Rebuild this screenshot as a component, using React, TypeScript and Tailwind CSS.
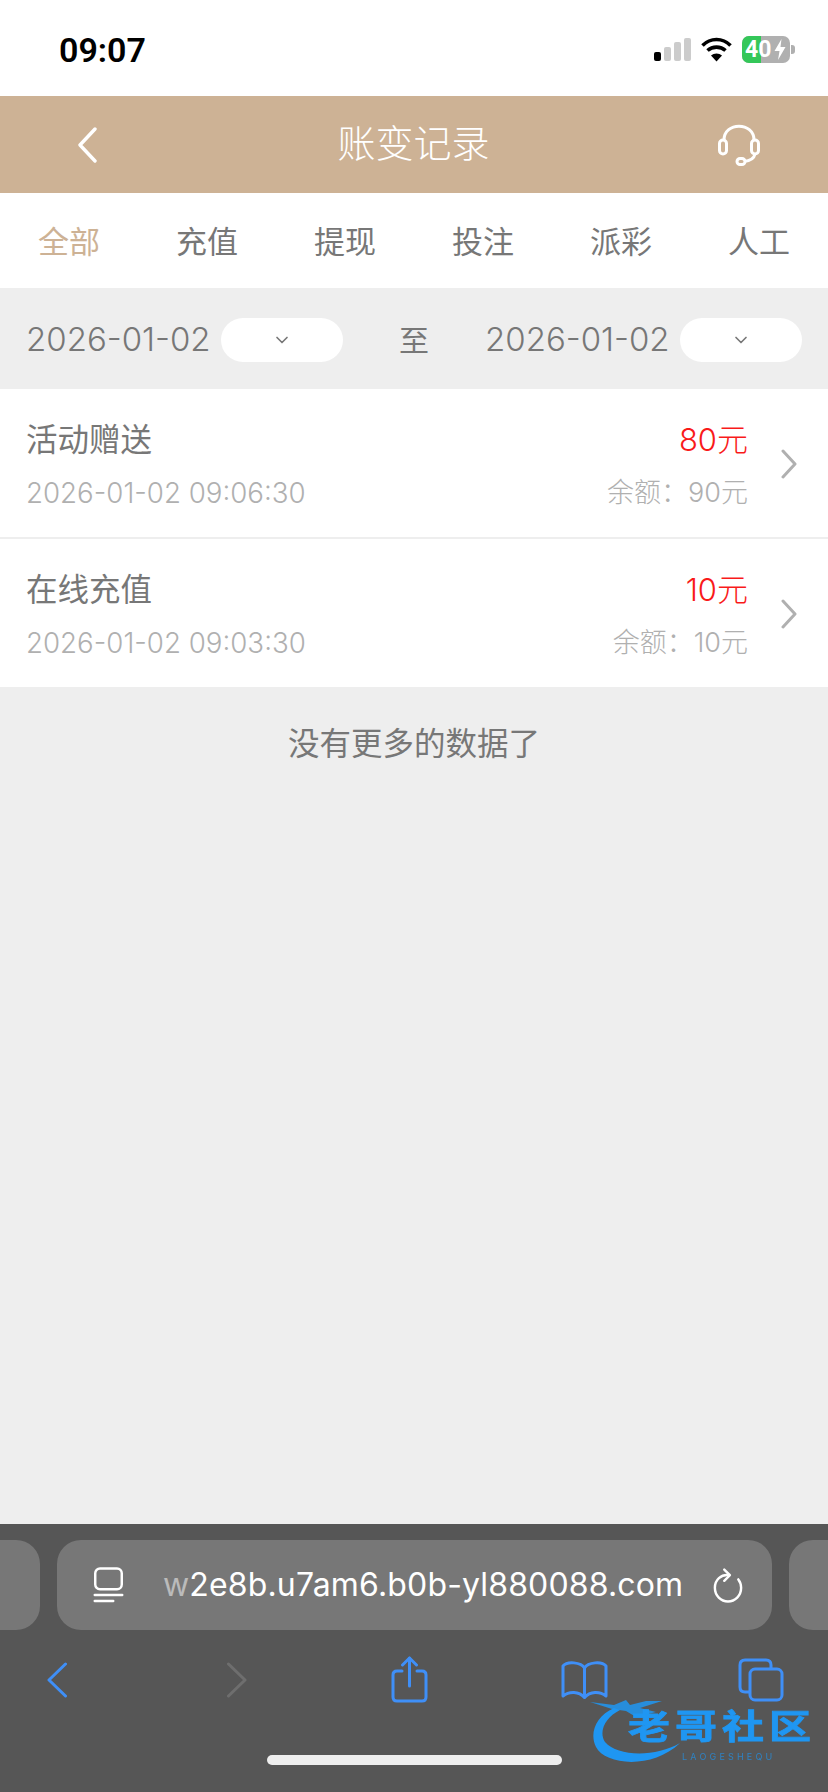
import { ChevronDown } from "lucide-react";

const tabs = ["全部", "充值", "提现", "投注", "派彩", "人工"];

const records = [
  { title: "活动赠送", time: "2026-01-02 09:06:30", amount: "80元", balance: "余额：90元" },
  { title: "在线充值", time: "2026-01-02 09:03:30", amount: "10元", balance: "余额：10元" },
];

const font = "font-['Inter','Noto_Sans_CJK_SC',sans-serif]";

function StatusBar() {
  return (
    <div className="flex h-[96px] items-center justify-between bg-white pt-[3px] pr-[33px] pl-[59px]">
      <span className="font-['Roboto',sans-serif] text-[34px] leading-none font-semibold text-black">09:07</span>
      <div className="flex items-center">
        {/* signal */}
        <div className="flex items-end gap-[3px]">
          <div className="h-[9px] w-[7px] rounded-[2px] bg-black" />
          <div className="h-[14px] w-[7px] rounded-[2px] bg-[#cccccc]" />
          <div className="h-[19px] w-[7px] rounded-[2px] bg-[#cccccc]" />
          <div className="h-[23px] w-[7px] rounded-[2px] bg-[#cccccc]" />
        </div>
        <svg className="ml-[10px]" width="31" height="25" viewBox="0 0 31 25" fill="none" stroke="#000" strokeWidth="3.6">
          <path d="M1.5 8.5C9.5 0.5 21.5 0.5 29.5 8.5" />
          <path d="M6.5 13.5C11.5 9 19.5 9 24.5 13.5" />
          <path d="M15.5 24.5L10 18.5C13 15.8 18 15.8 21 18.5Z" fill="#000" stroke="none" />
        </svg>
        {/* battery */}
        <div className="relative ml-[10px] flex h-[27px] w-[48px] overflow-hidden rounded-[7px] bg-[#b0b0b0]">
          <div className="w-[19px] bg-[#34c759]" />
          <span className="absolute top-0 left-[3px] font-['Roboto',sans-serif] text-[23px] leading-[27px] font-bold text-white">40</span>
          <svg className="absolute top-[3px] left-[31px]" width="14" height="21" viewBox="0 0 13 21" fill="#fff">
            <path d="M8 0L1 12H6L4.5 21L12 8H7Z" />
          </svg>
        </div>
        <div className="ml-[1px] h-[9px] w-[4px] rounded-r-[3px] bg-[#b0b0b0]" />
      </div>
    </div>
  );
}

function Header() {
  return (
    <div className="flex h-[97px] items-center justify-between bg-[#cdb295] pr-[67px] pl-[77px]">
      <svg width="20" height="36" viewBox="0 0 20 36" fill="none" stroke="#fff" strokeWidth="3.4" strokeLinecap="round" strokeLinejoin="round">
        <path d="M18 2L3 18L18 34" />
      </svg>
      <h1 className="mb-[3px] ml-[13px] text-[38px] leading-none font-light text-white">账变记录</h1>
      <svg width="44" height="42" viewBox="0 0 44 42" fill="none" stroke="#fff" strokeWidth="3">
        <path d="M7 16C7 -2.5 37 -2.5 37 16" />
        <rect x="2.5" y="16" width="7" height="14" rx="3.5" />
        <rect x="34.5" y="16" width="7" height="14" rx="3.5" />
        <path d="M38 30C37 35 32 37 27 37.5" />
        <rect x="20" y="34.5" width="8" height="6" rx="3" />
      </svg>
    </div>
  );
}

function DatePicker() {
  return (
    <div className="flex items-center">
      <span className="w-[195px] text-[33px] leading-none font-light text-[#777777]">2026-01-02</span>
      <div className="flex h-[44px] w-[122px] items-center justify-center rounded-[22px] bg-white">
        <ChevronDown size={20} color="#777777" strokeWidth={2} />
      </div>
    </div>
  );
}

function RecordRow({ title, time, amount, balance }: (typeof records)[number]) {
  return (
    <div className="flex h-[148px] items-center bg-white pr-[31px] pl-[26px]">
      <div className="flex flex-1 flex-col gap-[20px] pt-[4px]">
        <span className="text-[31.5px] leading-[36px] text-[#777777]">{title}</span>
        <span className="text-[27.7px] leading-[30px] font-light text-[#b0b0b0]">{time}</span>
      </div>
      <div className="flex flex-col items-end gap-[20px] pt-[4px]">
        <span className="text-[31px] leading-[36px] font-light text-[#f91a1a]">{amount}</span>
        <span className="text-[27px] leading-[30px] font-light text-[#b0b0b0]">{balance}</span>
      </div>
      <svg className="mt-[2px] ml-[33px]" width="16" height="30" viewBox="0 0 16 30" fill="none" stroke="#b0b0b0" strokeWidth="3" strokeLinecap="round" strokeLinejoin="round">
        <path d="M2 2L14 15L2 28" />
      </svg>
    </div>
  );
}

function Watermark() {
  return (
    <div className="absolute top-[1697px] left-[590px] h-[70px] w-[224px] text-[#1f96f2] blur-[0.7px]">
      <svg className="absolute top-0 left-0" width="224" height="70" viewBox="0 0 224 70" fill="#1f96f2">
        <path d="M24 11C6 19 -1 36 6 50C15 68 62 73 90 46C66 60 28 60 15 45C8 34 16 20 30 13Z" />
        <path d="M0 5L24 8L36 3L40 8L56 4L72 4L50 11L66 15L46 20L36 14L22 12Z" fillOpacity="0.85" />
      </svg>
      <span className="absolute top-[12px] left-[38px] origin-top scale-y-[0.8] text-[42px] leading-[44px] font-bold tracking-[5px] whitespace-nowrap [-webkit-text-stroke:1px_#1f96f2]">
        老哥社区
      </span>
      <span className="absolute top-[55px] left-[92px] text-[9px] leading-[10px] tracking-[3.2px] whitespace-nowrap opacity-70">LAOGESHEQU</span>
    </div>
  );
}

function SafariBar() {
  return (
    <div className="flex h-[268px] flex-col bg-[#565656] pt-[16px]">
      <div className="flex h-[90px] items-stretch gap-[17px]">
        <div className="-ml-[40px] w-[80px] shrink-0 rounded-[24px] bg-[#777777]" />
        <div className="flex w-[715px] shrink-0 items-center rounded-[24px] bg-[#777777] pr-[29px] pl-[36px]">
          <svg className="shrink-0" width="31" height="36" viewBox="0 0 32 38" fill="none" stroke="#fff" strokeWidth="2.6" strokeLinecap="round">
            <rect x="2" y="1.5" width="28" height="22" rx="5" />
            <path d="M1.5 29.5H30.5" />
            <path d="M1.5 36H21" />
          </svg>
          <span className="ml-[39px] flex-1 text-[32px] leading-none font-normal tracking-[0.15px] whitespace-nowrap text-white">
            <span className="text-white/50">w</span>2e8b.u7am6.b0b-yl880088.com
          </span>
          <svg className="shrink-0" width="30" height="37" viewBox="0 0 32 38" fill="none" stroke="#fff" strokeWidth="2.6" strokeLinecap="round" strokeLinejoin="round">
            <path d="M17 8C8.5 7 2 13 2 21.5C2 30 8.5 36 16 36C23.5 36 30 30 30 21.5C30 18 29 15 27 12.5" />
            <path d="M12 2L18 8L12 14" />
          </svg>
        </div>
        <div className="w-[80px] shrink-0 rounded-[24px] bg-[#777777]" />
      </div>
      <div className="mt-[26px] flex h-[47px] items-center pl-[47px]">
        <svg width="20" height="36" viewBox="0 0 20 36" fill="none" stroke="#3f8ff7" strokeWidth="3" strokeLinecap="round" strokeLinejoin="round">
          <path d="M18.5 2L2 18L18.5 34" />
        </svg>
        <svg className="ml-[160px]" width="20" height="36" viewBox="0 0 20 36" fill="none" stroke="#6e6e6e" strokeWidth="3" strokeLinecap="round" strokeLinejoin="round">
          <path d="M1.5 2L18 18L1.5 34" />
        </svg>
        <svg className="ml-[144px]" width="37" height="47" viewBox="0 0 37 47" fill="none" stroke="#3f8ff7" strokeWidth="3" strokeLinecap="round" strokeLinejoin="round">
          <path d="M11 15H6C3.5 15 2 16.5 2 19V41C2 43.5 3.5 45 6 45H31C33.5 45 35 43.5 35 41V19C35 16.5 33.5 15 31 15H26" />
          <path d="M18.5 30V2" />
          <path d="M11.5 9L18.5 2L25.5 9" />
        </svg>
        <svg className="ml-[133px]" width="47" height="38" viewBox="0 0 47 38" fill="none" stroke="#3f8ff7" strokeWidth="3" strokeLinecap="round" strokeLinejoin="round">
          <path d="M23.5 7C20 1 6 0 2 5V35C8 30 18 30 23.5 36.5C29 30 39 30 45 35V5C41 0 27 1 23.5 7Z" />
          <path d="M23.5 7V36" />
        </svg>
        <svg className="ml-[130px]" width="46" height="44" viewBox="0 0 46 44" fill="none" stroke="#3f8ff7" strokeWidth="3" strokeLinejoin="round">
          <path d="M11 34H7C3.5 34 2 32.5 2 29V7C2 3.5 3.5 2 7 2H28C31.5 2 33 3.5 33 7V10" />
          <rect x="12" y="11" width="32" height="31" rx="5" />
        </svg>
      </div>
      <div className="mx-auto mt-[52px] h-[10px] w-[295px] rounded-full bg-[#eeeeee]" />
    </div>
  );
}

export default function App() {
  return (
    <div className={`relative flex h-[1792px] w-[828px] flex-col overflow-hidden bg-[#eeeeee] ${font}`}>
      <StatusBar />
      <Header />

      {/* Tabs */}
      <div className="flex h-[95px] items-center justify-between bg-white px-[38px] pt-[1px]">
        {tabs.map((tab, i) => (
          <span key={tab} className={`text-[31px] leading-none ${i === 0 ? "text-[#cdb295]" : "text-[#777777]"}`}>
            {tab}
          </span>
        ))}
      </div>

      {/* Date filter */}
      <div className="flex h-[101px] items-center justify-between px-[26px] pt-[2px]">
        <DatePicker />
        <span className="text-[30px] leading-none text-[#777777]">至</span>
        <DatePicker />
      </div>

      {/* Records */}
      <div className="flex flex-col gap-[2px]">
        {records.map((r) => (
          <RecordRow key={r.time} {...r} />
        ))}
      </div>

      <div className="flex-1 pt-[39px] text-center text-[31.5px] leading-[36px] text-[#777777]">没有更多的数据了</div>

      <SafariBar />
      <Watermark />
    </div>
  );
}
